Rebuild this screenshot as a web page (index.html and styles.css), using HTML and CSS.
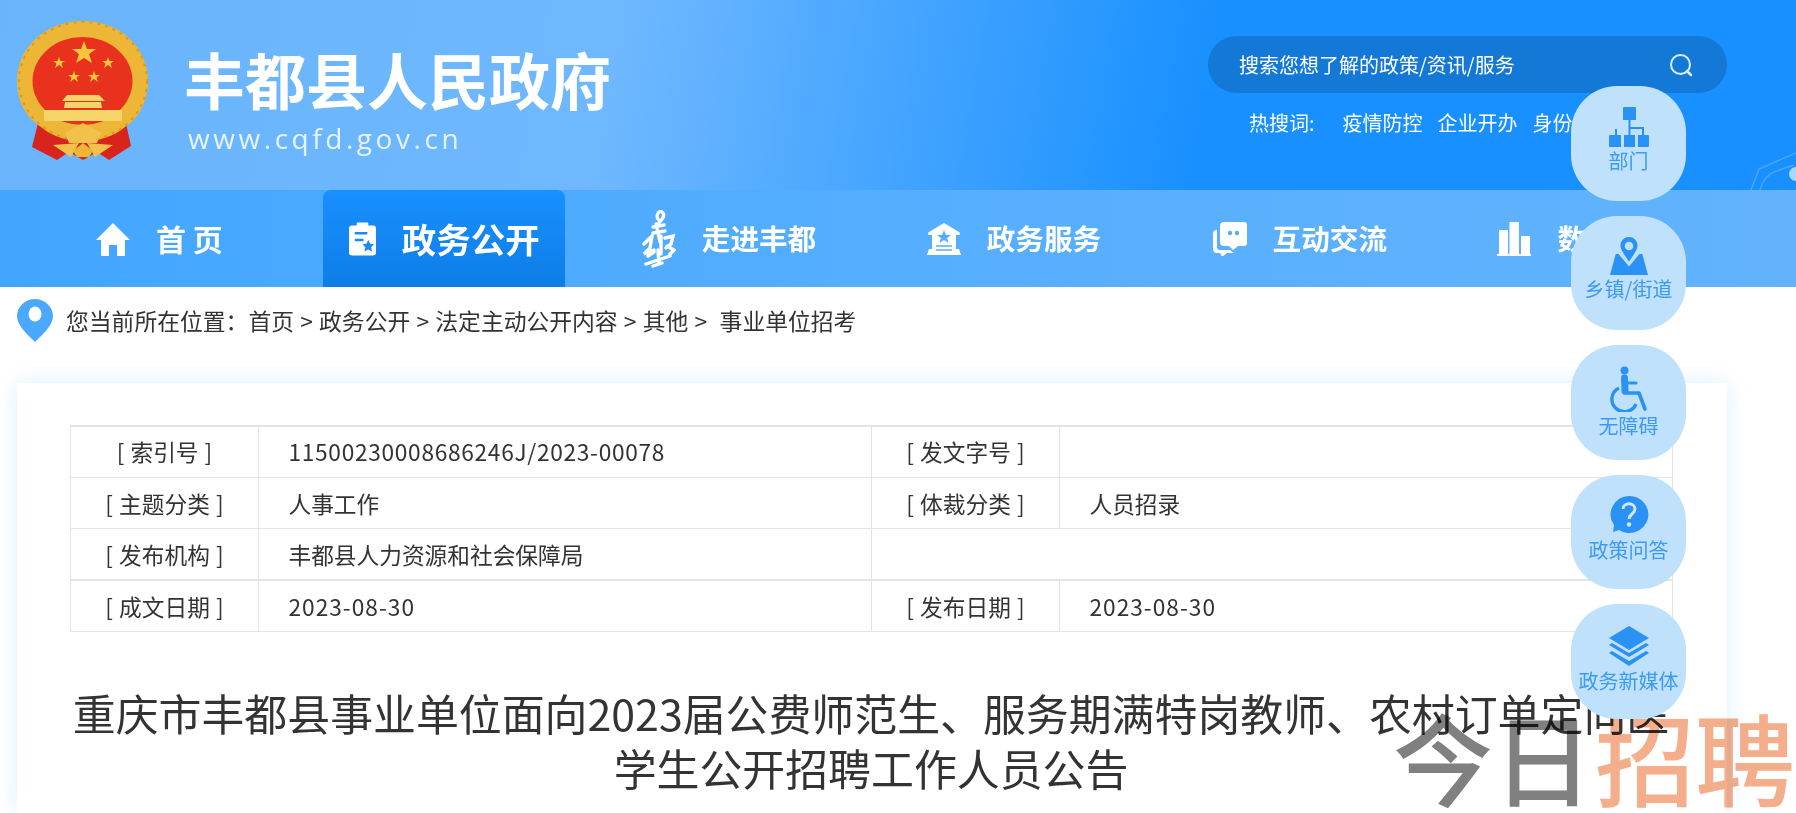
FILE: index.html
```html
<!DOCTYPE html>
<html lang="zh-CN">
<head>
<meta charset="utf-8">
<title>丰都县人民政府</title>
<link rel="stylesheet" href="styles.css">
</head>
<body>
<header class="top">
  <svg class="logo" viewBox="0 0 132 140" aria-hidden="true">
    <path d="M22 98 L15 126 L40 139 L52 131 L66 139 L80 131 L92 139 L114 125 L108 98 Z" fill="#d8241c"/>
    <path d="M66 0 C104 0 131 27 131 60 C131 84 118 100 108 106 C96 116 82 120 66 120 C50 120 36 116 24 106 C12 98 0 84 0 60 C0 27 28 0 66 0 Z" fill="#eeb637"/>
    <ellipse cx="66" cy="60" rx="64" ry="59" fill="none" stroke="#d99a22" stroke-width="2" stroke-dasharray="3 5"/>
    <ellipse cx="65.500" cy="60" rx="50" ry="44" fill="#e8321e"/>
    <path d="M67 20 L70 28 L79 28 L72 33 L75 42 L67 37 L59 42 L62 33 L55 28 L64 28 Z" fill="#f6c53c"/>
    <path d="M42 36 L43.500 40 L48 40 L44.500 42.500 L46 47 L42 44 L38 47 L39.500 42.500 L36 40 L40.500 40 Z" fill="#f6c53c"/>
    <path d="M91 36 L92.500 40 L97 40 L93.500 42.500 L95 47 L91 44 L87 47 L88.500 42.500 L85 40 L89.500 40 Z" fill="#f6c53c"/>
    <path d="M57 50 L58.500 54 L63 54 L59.500 56.500 L61 61 L57 58 L53 61 L54.500 56.500 L51 54 L55.500 54 Z" fill="#f6c53c"/>
    <path d="M77 50 L78.500 54 L83 54 L79.500 56.500 L81 61 L77 58 L73 61 L74.500 56.500 L71 54 L75.500 54 Z" fill="#f6c53c"/>
    <path d="M50 74 L45 80 L88 80 L82 74 Z M48 81 L84 81 L85 87 L47 87 Z M27 89 L105 89 L105 100 L27 100 Z" fill="#f6d568"/>
    <path d="M48 112 L66 102 L84 112 L80 122 L52 122 Z" fill="#f2c14a"/>
    <path d="M36 124 L62 122 L54 136 Z M96 124 L70 122 L78 136 Z" fill="#f2c14a"/>
    <path d="M56 130 L66 122 L76 130 L72 136 L60 136 Z" fill="#eeb637"/>
  </svg>
  <div class="brand">
    <div class="brand-name">丰都县人民政府</div>
    <div class="brand-url">www.cqfd.gov.cn</div>
  </div>
  <div class="finder">
    <div class="search">
      <span>搜索您想了解的政策/资讯/服务</span>
      <svg class="search-icon" viewBox="0 0 24 24" aria-hidden="true"><circle cx="11.500" cy="11.500" r="9.500" fill="none" stroke="#d9efff" stroke-width="2"/><path d="M18 18 L22 22" stroke="#d9efff" stroke-width="2.600" stroke-linecap="round"/></svg>
    </div>
    <div class="hot">
      <span class="hot-label">热搜词:</span>
      <span>疫情防控</span><span>企业开办</span><span>身份证办理</span>
    </div>
  </div>
  <svg class="corner" viewBox="0 0 46 40" aria-hidden="true">
    <path d="M1 40 L9 19 L46 3" fill="none" stroke="#8ec9ff" stroke-opacity=".4" stroke-width="1.500"/>
    <path d="M10 40 Q14 26 24 22 L44 15" fill="none" stroke="#8ec9ff" stroke-opacity=".4" stroke-width="1.500"/>
    <circle cx="46" cy="24" r="7" fill="#a8d8ff"/>
  </svg>
</header>

<nav class="nav">
  <a class="nav-item nav-home">
    <svg class="nav-icon" viewBox="0 0 34 34" aria-hidden="true"><path d="M17 1 L34 18 L29 18 L29 33 Q29 34 28 34 L21 34 L21 23 L13 23 L13 34 L6 34 Q5 34 5 33 L5 18 L0 18 Z" fill="#fff"/></svg>
    <span class="nav-text nav-text-home">首 页</span>
  </a>
  <a class="nav-item nav-active">
    <svg class="nav-icon nav-icon-doc" viewBox="0 0 28 34" aria-hidden="true"><path d="M3 3 H8 V1 Q8 0 9 0 H19 Q20 0 20 1 V3 H25 Q28 3 28 6 V31 Q28 34 25 34 H3 Q0 34 0 31 V6 Q0 3 3 3 Z" fill="#fff"/><path d="M6 11 H19 M6 18 H15" stroke="#1a8bf5" stroke-width="2.600"/><path d="M20 18 L22 22 L26 22.500 L23 25.500 L24 30 L20 28 L16 30 L17 25.500 L14 22.500 L18 22 Z" fill="#1a8bf5"/></svg>
    <span class="nav-text nav-text-big">政务公开</span>
  </a>
  <a class="nav-item nav-about">
    <svg class="nav-icon nav-icon-about" viewBox="0 0 36 58" aria-hidden="true"><g fill="none" stroke="#fff" stroke-width="3.400" stroke-linecap="round"><path d="M18 14 C22 10 26 5 22 2 C18 0 16 6 18 9"/><path d="M13 17 L24 15 M13 23 L25 21 M16 14 L20 32"/><path d="M4 34 L12 26 L10 38 L4 44 L14 40 M8 46 L14 42"/><path d="M21 26 L21 44 M25 28 L33 26 L31 34 L26 38 M27 36 L34 40 L30 44"/><path d="M6 54 L30 46 M18 40 L19 54 M13 56 L22 53"/></g></svg>
    <span class="nav-text">走进丰都</span>
  </a>
  <a class="nav-item">
    <svg class="nav-icon nav-icon-wide" viewBox="0 0 34 32" aria-hidden="true"><path d="M17 0 L32 9 Q34 11 32 12 L29 12 L29 26 L32 26 L34 32 L0 32 L2 26 L5 26 L5 12 L2 12 Q0 11 2 9 Z" fill="#fff"/><path d="M17 7 L19 12 L24 12 L20 15 L21.500 20 L17 17 L12.500 20 L14 15 L10 12 L15 12 Z" fill="#55adff"/><path d="M9 23 H25 M9 27 H25" stroke="#55adff" stroke-width="1.600"/></svg>
    <span class="nav-text">政务服务</span>
  </a>
  <a class="nav-item nav-talk">
    <svg class="nav-icon" viewBox="0 0 34 34" aria-hidden="true"><path d="M7 4 Q7 0 11 0 H31 Q34 0 34 3 V21 Q34 24 31 24 H25 L20 28 L16 24 L11 24 Q7 24 7 20 Z" fill="#fff"/><path d="M0 12 Q0 8 4 8 V25 Q4 28 7 28 H17 L21 31 H14 L9 35 L7 31 H4 Q0 31 0 27 Z" fill="#fff"/><circle cx="17" cy="11" r="2.200" fill="#55adff"/><circle cx="24" cy="11" r="2.200" fill="#55adff"/></svg>
    <span class="nav-text">互动交流</span>
  </a>
  <a class="nav-item">
    <svg class="nav-icon" viewBox="0 0 34 34" aria-hidden="true"><path d="M2 8 H11 V32 H2 Z M12.500 0 H22 V32 H12.500 Z M24 14 H33 V32 H24 Z M0 32 H34 V34 H0 Z" fill="#fff"/></svg>
    <span class="nav-text">数据发布</span>
  </a>
</nav>

<div class="crumb">
  <svg class="crumb-pin" viewBox="0 0 36 43" aria-hidden="true"><path d="M18 0 C28 0 36 8 36 17 C36 27 24 37 18 43 C12 37 0 27 0 17 C0 8 8 0 18 0 Z" fill="#4aa8ff"/><ellipse cx="18" cy="15" rx="6.500" ry="7.500" fill="#fff"/></svg>
  <span>您当前所在位置：</span><span>首页 &gt; 政务公开 &gt; 法定主动公开内容 &gt; 其他 &gt;&nbsp; 事业单位招考</span>
</div>

<main class="card">
  <table class="meta">
    <colgroup><col class="col-label"><col class="col-value"><col class="col-label"><col class="col-value"></colgroup>
    <tr class="row-strong">
      <th>[ 索引号 ]</th><td><span class="num">11500230008686246J/2023-00078</span></td>
      <th>[ 发文字号 ]</th><td></td>
    </tr>
    <tr>
      <th>[ 主题分类 ]</th><td>人事工作</td>
      <th>[ 体裁分类 ]</th><td>人员招录</td>
    </tr>
    <tr>
      <th>[ 发布机构 ]</th><td>丰都县人力资源和社会保障局</td>
      <td colspan="2"></td>
    </tr>
    <tr class="row-strong">
      <th>[ 成文日期 ]</th><td><span class="date">2023-08-30</span></td>
      <th>[ 发布日期 ]</th><td><span class="date">2023-08-30</span></td>
    </tr>
  </table>
  <h1 class="headline">重庆市丰都县事业单位面向2023届公费师范生、服务期满特岗教师、农村订单定向医学生公开招聘工作人员公告</h1>
</main>

<div class="stamp"><span class="stamp-dark">今日</span><span class="stamp-warm">招聘</span></div>

<aside class="rail">
  <a class="rail-item">
    <svg class="rail-icon" viewBox="0 0 40 40" aria-hidden="true"><path d="M14 1 Q14 0 15 0 H26 Q27 0 27 1 V13 H14 Z M19.500 13 H21.500 V20 H35 V28 H33 V22 H21.500 V28 H19.500 V22 H8 V28 H6 V22 H19.500 Z" fill="#2b92f5"/><path d="M1 28 H12 V40 H1 Q0 40 0 39 V29 Q0 28 1 28 Z M15 28 H26 V40 H15 Z M29 28 H39 Q40 28 40 29 V39 Q40 40 39 40 H29 Z" fill="#2b92f5"/></svg>
    <span>部门</span>
  </a>
  <a class="rail-item">
    <svg class="rail-icon rail-icon-map" viewBox="0 0 40 40" aria-hidden="true"><path d="M20 0 C26 0 29 5 29 9 C29 14 23 21 20 26 C17 21 11 14 11 9 C11 5 14 0 20 0 Z M20 5 A4.500 4.500 0 1 0 20 14 A4.500 4.500 0 1 0 20 5 Z" fill="#2b92f5" fill-rule="evenodd"/><path d="M9 18 L20 31 L31 18 L34 18 L40 40 L0 40 L6 18 Z" fill="#2b92f5"/></svg>
    <span>乡镇/街道</span>
  </a>
  <a class="rail-item">
    <svg class="rail-icon rail-icon-tall" viewBox="0 0 38 46" aria-hidden="true"><circle cx="14.500" cy="4.500" r="4" fill="#2b92f5"/><path d="M14.500 12 L15 25" fill="none" stroke="#2b92f5" stroke-width="7" stroke-linecap="round"/><path d="M15 17 H26" fill="none" stroke="#2b92f5" stroke-width="3.200" stroke-linecap="round"/><path d="M15 27 H29 L35 43" fill="none" stroke="#2b92f5" stroke-width="3.600" stroke-linecap="round" stroke-linejoin="round"/><path d="M9 22 A12.500 12.500 0 1 0 26 38" fill="none" stroke="#2b92f5" stroke-width="3.400"/></svg>
    <span>无障碍</span>
  </a>
  <a class="rail-item">
    <svg class="rail-icon rail-icon-ask" viewBox="0 0 38 38" aria-hidden="true"><path d="M19 0 A19 18.500 0 1 1 9 34 L3 36 L4 29 A19 18.500 0 0 1 19 0 Z" fill="#2b92f5"/><path d="M13 13 C13 6 25 6 25 13 C25 18 19 18 19 23" fill="none" stroke="#cfe8fd" stroke-width="3"/><circle cx="19" cy="28.500" r="2.200" fill="#cfe8fd"/></svg>
    <span>政策问答</span>
  </a>
  <a class="rail-item">
    <svg class="rail-icon rail-icon-stack" viewBox="0 0 40 40" aria-hidden="true"><path d="M20 0 L40 12 L20 24 L0 12 Z" fill="#2b92f5"/><path d="M0 19 L3 17 L20 27 L37 17 L40 19 L20 31 Z" fill="#2b92f5"/><path d="M0 27 L3 25 L20 35 L37 25 L40 27 L20 40 Z" fill="#2b92f5"/></svg>
    <span>政务新媒体</span>
  </a>
</aside>
</body>
</html>
```

FILE: styles.css
```css
* { box-sizing: border-box; }
html, body { margin: 0; height: 813px; overflow: hidden; }
body {
  position: relative;
  background: #fff;
  color: #333;
  font-family: "Noto Sans CJK SC", "Open Sans", sans-serif;
}

.top {
  position: relative;
  height: 190px;
  display: flex;
  align-items: flex-start;
  padding: 0 69px 0 17px;
  background: linear-gradient(100deg, #69b4fb 0, #6fb8ff 34%, #1890ff 67%, #1890ff 100%);
}
.logo { width: 132px; height: 140px; margin-top: 21px; flex: none; }
.brand { margin-left: 35px; color: #fff; }
.brand-name {
  margin-top: 43px;
  font-size: 61px;
  line-height: 72px;
  font-weight: 700;
  white-space: nowrap;
}
.brand-url {
  margin-top: 5px;
  margin-left: 4px;
  font-family: "Open Sans", sans-serif;
  font-size: 28px;
  line-height: 36px;
  letter-spacing: 3.550px;
  color: #e6f3ff;
}
.finder { margin-left: auto; width: 519px; padding-top: 36px; color: #fff; }
.search {
  height: 57px;
  display: flex;
  align-items: center;
  justify-content: space-between;
  padding: 0 34px 0 31px;
  border-radius: 29px;
  background: #1479d6;
  font-size: 20px;
}
.search-icon { width: 24px; height: 24px; }
.hot {
  display: flex;
  gap: 15px;
  margin-top: 17px;
  padding-left: 41px;
  font-size: 20px;
  line-height: 26px;
  white-space: nowrap;
}
.hot-label { margin-right: 13px; }
.corner { position: absolute; right: 0; top: 150px; width: 46px; height: 40px; }

.nav {
  height: 97px;
  display: flex;
  align-items: stretch;
  padding-left: 96px;
  background: linear-gradient(90deg, #42a6ff 0, #56aeff 50%, #62b3fc 100%);
  color: #fff;
}
.nav-item {
  display: flex;
  align-items: center;
  gap: 26px;
  flex: none;
  margin-right: 111.500px;
}
.nav-home { margin-right: 100px; }
.nav-active {
  margin-right: 75px;
  padding: 0 25px 0 26px;
  border-radius: 8px 8px 0 0;
  background: linear-gradient(180deg, #1890ff 0, #0e7de6 100%);
}
.nav-about { margin-right: 110.500px; }
.nav-talk { margin-right: 110.500px; }
.nav-icon { width: 34px; height: 34px; flex: none; }
.nav-icon-doc { width: 27px; }
.nav-icon-about { width: 36px; height: 58px; }
.nav-icon-wide { height: 32px; }
.nav-text {
  margin-top: -2px;
  font-size: 28.600px;
  font-weight: 700;
  line-height: 40px;
  white-space: nowrap;
}
.nav-text-home { font-size: 30px; }
.nav-text-big { font-size: 34.500px; }

.crumb {
  height: 66px;
  display: flex;
  align-items: center;
  padding-left: 17px;
  font-size: 22.800px;
  word-spacing: 1.100px;
  white-space: nowrap;
}
.crumb-pin { width: 36px; height: 43px; margin-right: 13px; flex: none; }

.card {
  margin: 30px 69px 0 17px;
  padding: 42px 55px 0 53px;
  height: 430px;
  background: #fff;
  box-shadow: 0 0 22px rgba(24, 144, 255, .14);
}
.meta {
  width: 100%;
  table-layout: fixed;
  border-collapse: collapse;
  font-size: 22.700px;
  color: #333;
}
.col-label { width: 188px; }
.col-value { width: 613px; }
.meta th, .meta td {
  height: 51.400px;
  padding: 0;
  border: 1px solid #e4e4e4;
  font-weight: 400;
}
.meta th { text-align: center; word-spacing: 1px; }
.meta td { padding-left: 29.500px; }
.row-strong th, .row-strong td { border-top: 2px solid #e4e4e4; }
.num { letter-spacing: .7px; }
.date { letter-spacing: 1px; }
.headline {
  margin: 53px 0 0;
  font-size: 42.900px;
  line-height: 55px;
  font-weight: 400;
  text-align: center;
  color: #333;
}

.stamp {
  position: absolute;
  left: 1393px;
  top: 700px;
  display: flex;
  font-size: 100px;
  line-height: 112px;
  font-weight: 500;
  white-space: nowrap;
  mix-blend-mode: multiply;
}
.stamp-dark { color: #808080; margin-right: 2px; }
.stamp-warm { color: #f5ae8c; }

.rail {
  position: absolute;
  left: 1571px;
  top: 86px;
  width: 115px;
  display: flex;
  flex-direction: column;
  gap: 15px;
}
.rail-item {
  height: 114.500px;
  display: flex;
  flex-direction: column;
  align-items: center;
  gap: 2px;
  padding-top: 21px;
  border-radius: 46px;
  background: #c0e1fb;
  color: #3c9af5;
  font-size: 20px;
  line-height: 24px;
  white-space: nowrap;
}
.rail-icon { width: 40px; height: 40px; flex: none; }
.rail-icon-map { height: 38px; }
.rail-icon-tall { height: 46px; }
.rail-icon-ask { height: 38px; margin-bottom: 2px; }
.rail-icon-stack { height: 42px; }
```
